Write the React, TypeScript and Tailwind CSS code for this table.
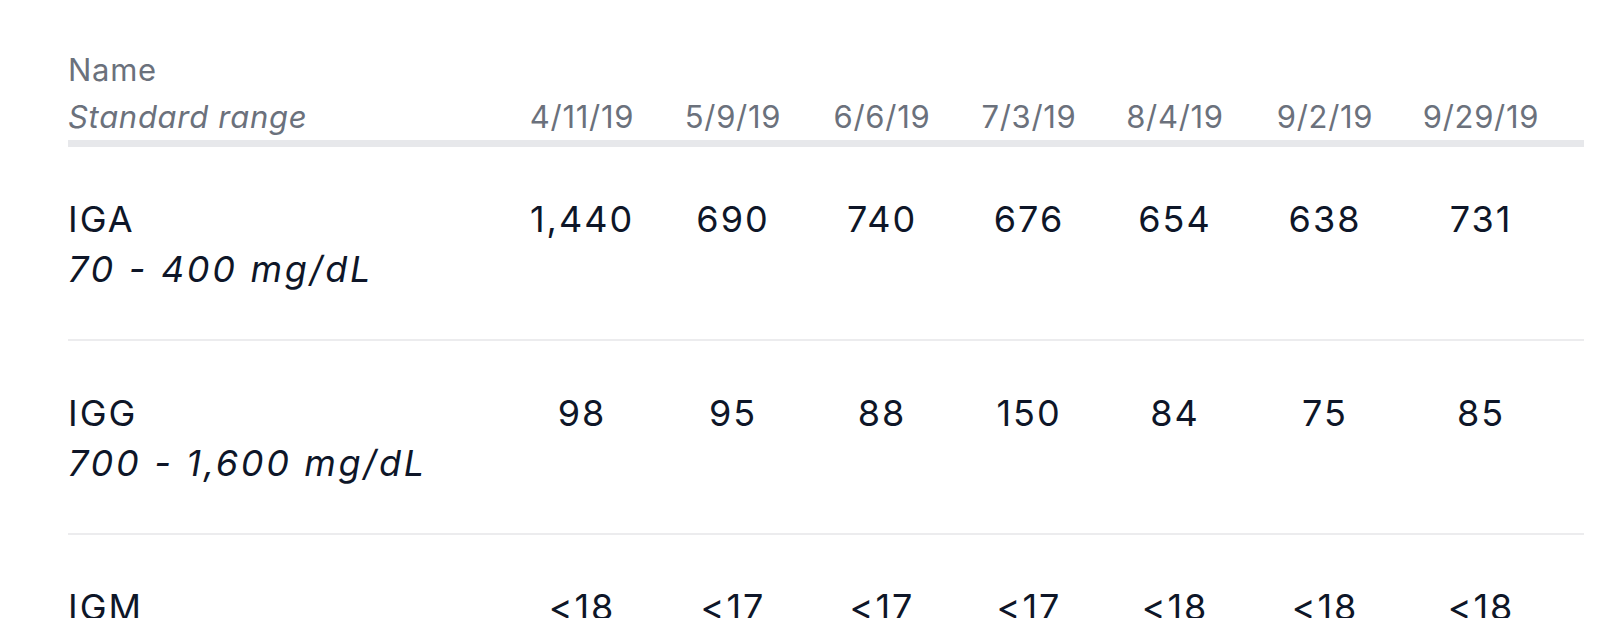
const dates = ["4/11/19", "5/9/19", "6/6/19", "7/3/19", "8/4/19", "9/2/19", "9/29/19"]

const rows = [
  { name: "IGA", range: "70 - 400 mg/dL", values: ["1,440", "690", "740", "676", "654", "638", "731"] },
  { name: "IGG", range: "700 - 1,600 mg/dL", values: ["98", "95", "88", "150", "84", "75", "85"] },
  { name: "IGM", range: "40 - 230 mg/dL", values: ["<18", "<17", "<17", "<17", "<18", "<18", "<18"] },
]

const cols = "grid grid-cols-[438px_152px_150px_148px_146px_146px_154px_158px_1fr]"

export default function App() {
  return (
    <div className="h-[618px] overflow-hidden bg-white pl-[68px] pr-[16px] font-['Inter',sans-serif]">
      {/* header */}
      <div
        className={`${cols} pt-[46px] border-b-[7px] border-[#e7e8eb] text-[31px] leading-[47px] tracking-[0.7px] text-[#6b717c]`}
      >
        <div>
          <div>Name</div>
          <div className="italic">Standard range</div>
        </div>
        {dates.map((d) => (
          <div key={d} className="self-end text-center">
            {d}
          </div>
        ))}
        <div />
      </div>

      {rows.map((r) => (
        <div
          key={r.name}
          className={`${cols} pt-[47px] pb-[45px] border-b-2 border-[#ececee] text-[36px] leading-[50px] tracking-[2px] text-[#0e1628]`}
        >
          <div>
            <div>{r.name}</div>
            <div className="italic tracking-[2.7px]">{r.range}</div>
          </div>
          {r.values.map((v, i) => (
            <div key={i} className="text-center">
              {v}
            </div>
          ))}
          <div />
        </div>
      ))}
    </div>
  )
}
